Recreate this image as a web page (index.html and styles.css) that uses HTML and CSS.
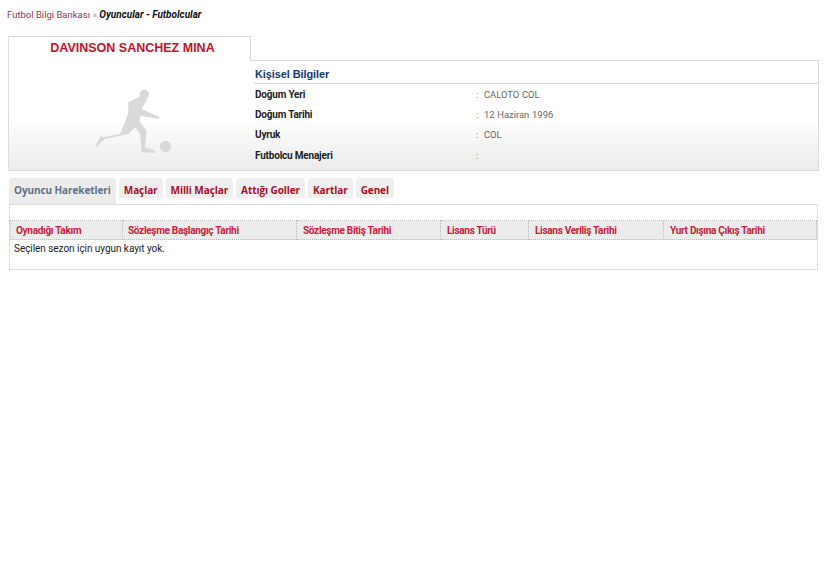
FILE: index.html
```html
<!DOCTYPE html>
<html lang="tr">
<head>
  <meta charset="UTF-8">
  <title>Futbol Bilgi Bankası</title>
  <link rel="stylesheet" href="styles.css">
</head>
<body>

  <div class="breadcrumb">
    <a href="#">Futbol Bilgi Bankası</a> <span class="sep">»</span> <em>Oyuncular - Futbolcular</em>
  </div>

  <div class="profile">
    <div class="profile-left">
      <h1>DAVINSON SANCHEZ MINA</h1>
      <svg class="player" viewBox="85 85 90 75" width="90" height="75">
        <circle cx="144.300" cy="95.500" r="4.700"/>
        <circle cx="165.500" cy="147.500" r="5.500"/>
        <path d="M95 147.300 L101 136.700 L103.300 138.300 L120 135 L125 123.300 L128.300 113.300 L128.300 103.300 L135 100 L141 97 L147 100 L141.700 110 L159 117.700 L159 120 L140 116.700 L140 123.300 L146.700 131.700 L145 148.300 L155 151.700 L154.300 154 L141.700 153.300 L140 135 L135 128.300 L128.300 135 L105 140 L96.700 147.700 Z"/>
      </svg>
    </div>
    <div class="profile-right">
      <h2>Kişisel Bilgiler</h2>
      <div class="info-row"><b>Doğum Yeri</b><span>:&nbsp; CALOTO COL</span></div>
      <div class="info-row"><b>Doğum Tarihi</b><span>:&nbsp; 12 Haziran 1996</span></div>
      <div class="info-row"><b>Uyruk</b><span>:&nbsp; COL</span></div>
      <div class="info-row last"><b>Futbolcu Menajeri</b><span>:</span></div>
    </div>
  </div>

  <ul class="tabs">
    <li class="active"><a href="#">Oyuncu Hareketleri</a></li>
    <li><a href="#">Maçlar</a></li>
    <li><a href="#">Milli Maçlar</a></li>
    <li><a href="#">Attığı Goller</a></li>
    <li><a href="#">Kartlar</a></li>
    <li><a href="#">Genel</a></li>
  </ul>

  <div class="results">
    <table>
      <thead>
        <tr>
          <th class="c1">Oynadığı Takım</th>
          <th class="c2">Sözleşme Başlangıç Tarihi</th>
          <th class="c3">Sözleşme Bitiş Tarihi</th>
          <th class="c4">Lisans Türü</th>
          <th class="c5">Lisans Veriliş Tarihi</th>
          <th class="c6">Yurt Dışına Çıkış Tarihi</th>
        </tr>
      </thead>
    </table>
    <p class="empty">Seçilen sezon için uygun kayıt yok.</p>
  </div>

</body>
</html>
```

FILE: styles.css
```css
body {
  font-family: Roboto, "Open Sans", sans-serif;
  font-size: 10px;
  color: #333;
  background-color: white;
  margin: 0;
  padding: 8px 8px 0;
}

a {
  text-decoration: none;
}

.breadcrumb {
  height: 28px;
  line-height: 14px;
  font-size: 9.500px;
  margin-left: -1px;
  color: #8c3a55;
}

.breadcrumb a {
  color: #8c3a55;
}

.breadcrumb .sep {
  color: #999;
}

.breadcrumb em {
  font-size: 10px;
  font-weight: bold;
  color: #111;
}

.profile {
  display: flex;
  width: 811px;
  height: 135px;
}

.profile-left {
  position: relative;
  width: 243px;
  box-sizing: border-box;
  border: 1px solid #dcdcdc;
  border-right: none;
  background: linear-gradient(to top, #ebebeb, #ffffff 52px);
  text-align: center;
  flex: none;
}

.profile-left::after {
  content: "";
  position: absolute;
  top: 0;
  right: 0;
  width: 1px;
  height: 24px;
  background-color: #dcdcdc;
}

.profile-left h1 {
  margin: 0;
  padding: 4px 0 0 5px;
  height: 24px;
  box-sizing: border-box;
  font-family: "Liberation Sans", Arial, sans-serif;
  font-size: 12.500px;
  line-height: 15px;
  font-weight: bold;
  color: #c8102e;
}

.player {
  display: block;
  margin: 23px 0 0 76px;
  fill: #d9d9d9;
  filter: blur(0.5px);
}

.profile-right {
  flex: 1;
  margin-top: 24px;
  box-sizing: border-box;
  border: 1px solid #dcdcdc;
  border-left: none;
  background: linear-gradient(to top, #ebebeb, #ffffff 52px);
}

.profile-right h2 {
  margin: 0 0 0 3px;
  height: 23px;
  box-sizing: border-box;
  padding: 6px 0 0 1px;
  font-family: "Liberation Sans", Arial, sans-serif;
  font-size: 11px;
  line-height: 15px;
  font-weight: bold;
  letter-spacing: -0.1px;
  color: #17386b;
  border-bottom: 1px solid #d8d8d8;
}

.info-row {
  display: flex;
  height: 20px;
  line-height: 22px;
  padding-left: 4px;
  font-size: 10px;
}

.info-row.last {
  height: 21px;
  line-height: 24px;
}

.info-row b {
  width: 221px;
  color: #222;
  letter-spacing: -0.2px;
}

.info-row span {
  font-size: 9.400px;
  color: #666;
  word-spacing: 0.5px;
}

.tabs {
  display: flex;
  gap: 3px;
  list-style: none;
  margin: 7px 0 0 1px;
  padding: 0;
  height: 27px;
  font-family: "Open Sans", sans-serif;
}

.tabs li {
  background-color: #efefef;
  border-radius: 4px 4px 0 0;
  height: 20px;
  line-height: 25px;
  padding: 0 5px;
  font-weight: bold;
  font-size: 10px;
  letter-spacing: -0.08px;
}

.tabs li a {
  color: #a50f28;
}

.tabs li.active {
  background-color: #ececec;
  height: 26px;
}

.tabs li.active a {
  color: #5f7186;
}

.results {
  width: 809px;
  height: 66px;
  margin: -1px 0 0 1px;
  box-sizing: border-box;
  border: 1px solid #dedede;
  padding-top: 15px;
}

.results table {
  width: 100%;
  border-collapse: collapse;
  table-layout: fixed;
}

.results th {
  height: 18px;
  padding: 0 0 0 6px;
  background-color: #ececec;
  border: 1px dotted #bbb;
  text-align: left;
  font-size: 10px;
  font-weight: bold;
  letter-spacing: -0.3px;
  color: #c8203a;
}

.results th.c1,
.results th.c2 {
  padding-left: 5px;
}

.c1 { width: 106px; }
.c2 { width: 168px; }
.c3 { width: 137px; }
.c4 { width: 81px; }
.c5 { width: 128px; }

.empty {
  margin: 0;
  padding: 2px 0 0 4px;
  line-height: 14px;
  letter-spacing: -0.05px;
  color: #222;
}
```
